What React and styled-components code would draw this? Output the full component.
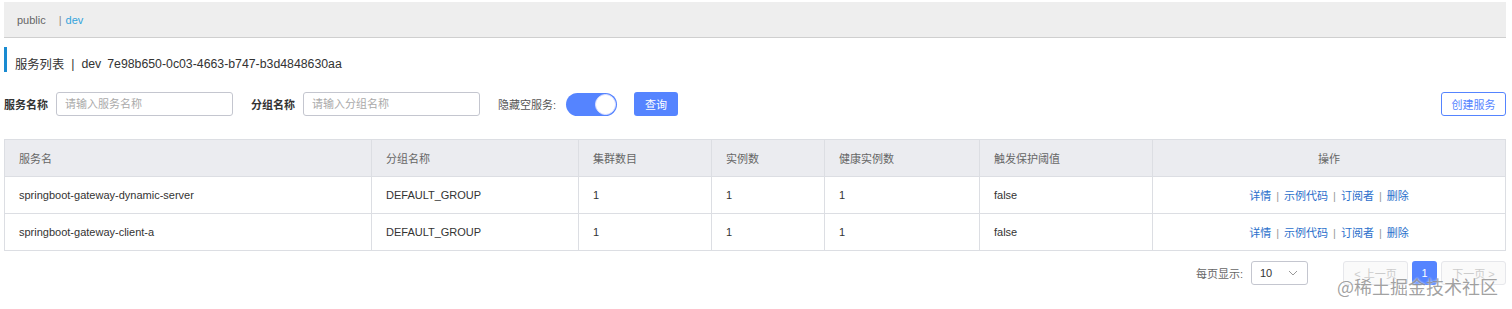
import React from 'react';
import styled, { createGlobalStyle } from 'styled-components';

const GlobalStyle = createGlobalStyle`
  body {
    margin: 0;
    background: #fff;
    font-family: "Liberation Sans", "Noto Sans CJK SC", sans-serif;
    font-size: 12px;
    color: #333;
  }
`;

const services = [
  { name: 'springboot-gateway-dynamic-server', group: 'DEFAULT_GROUP', clusters: 1, instances: 1, healthy: 1, threshold: 'false' },
  { name: 'springboot-gateway-client-a', group: 'DEFAULT_GROUP', clusters: 1, instances: 1, healthy: 1, threshold: 'false' },
];

const columns = [
  { key: 'name', title: '服务名', width: 367 },
  { key: 'group', title: '分组名称', width: 207 },
  { key: 'clusters', title: '集群数目', width: 133 },
  { key: 'instances', title: '实例数', width: 113 },
  { key: 'healthy', title: '健康实例数', width: 155 },
  { key: 'threshold', title: '触发保护阈值', width: 173 },
];

const actions = ['详情', '示例代码', '订阅者', '删除'];

function App() {
  return (
    <Page>
      <GlobalStyle />
      <NamespaceBar>
        <NsItem>public</NsItem>
        <NsSep>|</NsSep>
        <NsItem active>dev</NsItem>
      </NamespaceBar>

      <PageTitle>
        <span>服务列表</span>
        <TitleSep>|</TitleSep>
        <span>dev</span>
        <span>7e98b650-0c03-4663-b747-b3d4848630aa</span>
      </PageTitle>

      <FilterRow>
        <FilterLabel>服务名称</FilterLabel>
        <TextInput placeholder="请输入服务名称" />
        <FilterLabel>分组名称</FilterLabel>
        <TextInput placeholder="请输入分组名称" />
        <FilterLabel normal>隐藏空服务:</FilterLabel>
        <Switch>
          <Knob />
        </Switch>
        <PrimaryButton>查询</PrimaryButton>
        <Spacer />
        <OutlineButton>创建服务</OutlineButton>
      </FilterRow>

      <Table>
        <colgroup>
          {columns.map((c) => (
            <col key={c.key} style={{ width: c.width }} />
          ))}
          <col />
        </colgroup>
        <thead>
          <tr>
            {columns.map((c) => (
              <Th key={c.key}>{c.title}</Th>
            ))}
            <Th center>操作</Th>
          </tr>
        </thead>
        <tbody>
          {services.map((s) => (
            <tr key={s.name}>
              {columns.map((c) => (
                <Td key={c.key}>{s[c.key]}</Td>
              ))}
              <Td center>
                {actions.map((a, i) => (
                  <React.Fragment key={a}>
                    {i > 0 && <LinkSep>|</LinkSep>}
                    <ActionLink>{a}</ActionLink>
                  </React.Fragment>
                ))}
              </Td>
            </tr>
          ))}
        </tbody>
      </Table>

      <Pager>
        <PagerLabel>每页显示:</PagerLabel>
        <PageSize>
          <span>10</span>
          <svg width="12" height="12" viewBox="0 0 12 12" fill="none" stroke="#999" strokeWidth="1">
            <path d="M2 4l4 4 4-4" />
          </svg>
        </PageSize>
        <PagerButtons>
          <PageButton disabled>&lt; 上一页</PageButton>
          <PageNumber>1</PageNumber>
          <PageButton disabled>下一页 &gt;</PageButton>
        </PagerButtons>
        <Watermark>@稀土掘金技术社区</Watermark>
      </Pager>
    </Page>
  );
}

export default App;

const Page = styled.div`
  box-sizing: border-box;
  min-height: 309px;
  padding: 2px 6px 0 4px;
  width: 1512px;
`;

const NamespaceBar = styled.div`
  height: 35px;
  background: #eeeeee;
  border-bottom: 1px solid #cfcfcf;
  display: flex;
  align-items: center;
  padding-left: 13px;
`;

const NsItem = styled.span`
  font-size: 11px;
  color: ${(p) => (p.active ? '#33a3dc' : '#666')};
`;

const NsSep = styled.span`
  color: #888;
  font-size: 11px;
  margin: 0 4px 0 13px;
`;

const PageTitle = styled.div`
  box-sizing: border-box;
  margin-top: 9px;
  height: 25px;
  padding-top: 8px;
  border-left: 3px solid #1a8bd1;
  padding-left: 8px;
  display: flex;
  align-items: center;
  gap: 6px;
  font-size: 12.3px;
  color: #333;
`;

const TitleSep = styled.span`
  margin: 0 1px;
`;

const FilterRow = styled.div`
  margin-top: 20px;
  display: flex;
  align-items: center;
  height: 24px;
`;

const FilterLabel = styled.label`
  font-size: 11px;
  font-weight: ${(p) => (p.normal ? 'normal' : 'bold')};
  color: ${(p) => (p.normal ? '#555' : '#333')};
  margin-right: ${(p) => (p.normal ? '10px' : '8px')};
`;

const TextInput = styled.input`
  box-sizing: border-box;
  width: 177px;
  height: 24px;
  margin-right: 18px;
  border: 1px solid #c4c6cf;
  border-radius: 3px;
  padding: 0 8px;
  font-family: inherit;
  font-size: 11px;
  outline: none;
  &::placeholder {
    color: #aaa;
  }
`;

const Switch = styled.div`
  box-sizing: border-box;
  width: 51px;
  height: 23px;
  border-radius: 12px;
  background: #5584ff;
  position: relative;
  margin-right: 17px;
`;

const Knob = styled.div`
  position: absolute;
  right: 1px;
  top: 1px;
  width: 21px;
  height: 21px;
  border-radius: 50%;
  background: #fff;
  box-sizing: border-box;
  border: 1px solid #dfe3ff;
`;

const PrimaryButton = styled.button`
  height: 24px;
  width: 44px;
  border: none;
  border-radius: 3px;
  background: #5584ff;
  color: #fff;
  font-family: inherit;
  font-size: 11px;
  padding: 0;
`;

const Spacer = styled.div`
  flex: 1;
`;

const OutlineButton = styled.button`
  height: 24px;
  width: 65px;
  border: 1px solid #5584ff;
  border-radius: 3px;
  background: #fff;
  color: #5584ff;
  font-family: inherit;
  font-size: 11px;
  padding: 0;
`;

const Table = styled.table`
  margin-top: 23px;
  width: 100%;
  border-collapse: collapse;
  table-layout: fixed;
  border: 1px solid #dcdee3;
`;

const Th = styled.th`
  height: 36px;
  background: #ebecf0;
  border: 1px solid #dcdee3;
  font-weight: normal;
  font-size: 11px;
  color: #666;
  text-align: ${(p) => (p.center ? 'center' : 'left')};
  padding: 0 14px;
`;

const Td = styled.td`
  height: 36px;
  border: 1px solid #dcdee3;
  font-size: 11px;
  color: #333;
  text-align: ${(p) => (p.center ? 'center' : 'left')};
  padding: 0 14px;
`;

const ActionLink = styled.a`
  color: #2b6fcb;
  cursor: pointer;
`;

const LinkSep = styled.span`
  color: #999;
  margin: 0 5px;
`;

const Pager = styled.div`
  position: relative;
  display: flex;
  align-items: center;
  justify-content: flex-end;
  margin-top: 10px;
  height: 24px;
`;

const PagerLabel = styled.span`
  font-size: 11px;
  color: #666;
  margin-right: 8px;
`;

const PageSize = styled.div`
  box-sizing: border-box;
  width: 57px;
  height: 24px;
  border: 1px solid #c4c6cf;
  border-radius: 3px;
  display: flex;
  align-items: center;
  justify-content: space-between;
  padding: 0 8px;
  font-size: 11px;
  color: #333;
  margin-right: 35px;
`;

const PagerButtons = styled.div`
  display: flex;
  align-items: center;
  gap: 4px;
`;

const PageButton = styled.button`
  box-sizing: border-box;
  width: 65px;
  height: 24px;
  border: 1px solid #e6e7eb;
  border-radius: 3px;
  background: #fafafa;
  color: #ccc;
  font-family: inherit;
  font-size: 11px;
  padding: 0;
`;

const PageNumber = styled.button`
  width: 25px;
  height: 24px;
  border: none;
  border-radius: 3px;
  background: #5584ff;
  color: #fff;
  font-family: inherit;
  font-size: 11px;
  padding: 0;
`;

const Watermark = styled.div`
  position: absolute;
  right: 8px;
  top: 16px;
  line-height: 1;
  font-size: 18px;
  color: rgba(120, 120, 120, 0.7);
  font-family: "Noto Sans CJK SC", sans-serif;
  text-shadow: 0 0 2px #fff;
  pointer-events: none;
`;
